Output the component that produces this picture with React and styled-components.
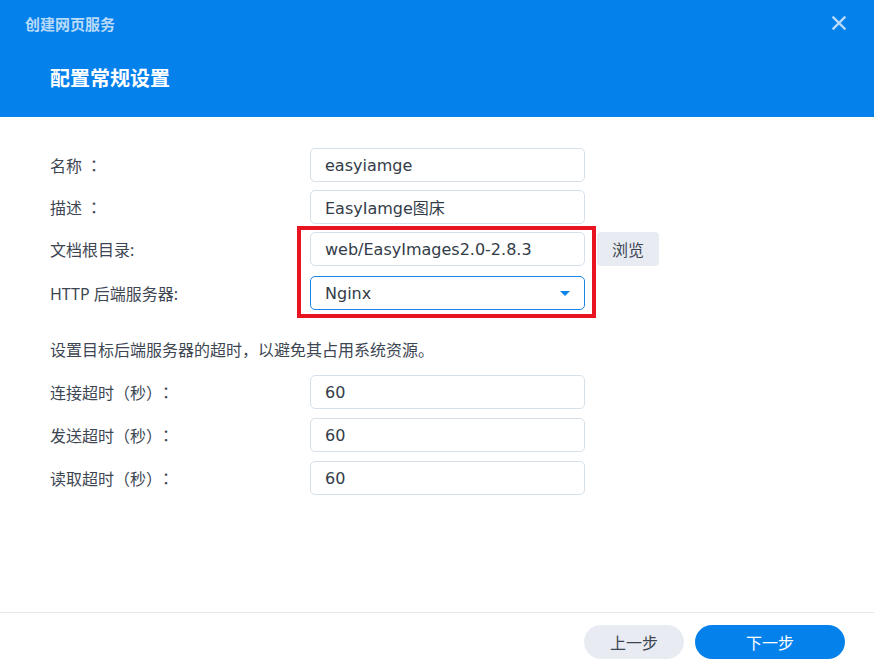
import React from 'react';
import styled, { createGlobalStyle } from 'styled-components';

const GlobalStyle = createGlobalStyle`
  html, body {
    margin: 0;
    padding: 0;
    background: #ffffff;
  }
  body {
    font-family: "Noto Sans", "Noto Sans CJK SC", sans-serif;
  }
`;

const Dialog = styled.div`
  width: 874px;
  height: 670px;
  display: flex;
  flex-direction: column;
  background: #fff;
  overflow: hidden;
`;

const Header = styled.header`
  height: 117px;
  box-sizing: border-box;
  background: #0581ec;
  display: flex;
  flex-direction: column;
  padding: 13px 25px 0 25px;
`;

const TopBar = styled.div`
  display: flex;
  align-items: center;
  justify-content: space-between;
  height: 20px;
`;

const DialogName = styled.div`
  font-size: 15px;
  font-weight: 700;
  color: rgba(255, 255, 255, 0.72);
`;

const CloseButton = styled.button`
  border: 0;
  background: transparent;
  padding: 0;
  width: 20px;
  height: 20px;
  display: flex;
  align-items: center;
  justify-content: center;
  cursor: pointer;
`;

const StepTitle = styled.h1`
  margin: 33px 0 0 25px;
  font-size: 20px;
  line-height: 26px;
  font-weight: 700;
  color: #fff;
`;

const Body = styled.main`
  flex: 1;
  padding: 31px 50px 0 50px;
`;

const Section = styled.div`
  position: relative;
  display: flex;
  flex-direction: column;
  gap: ${({ gap }) => gap || 8}px;
`;

const Row = styled.div`
  display: grid;
  grid-template-columns: 260px 275px auto;
  align-items: center;
`;

const Label = styled.label`
  font-size: 16px;
  color: #3d4652;
`;

const Colon = styled.span`
  font-family: "Noto Sans CJK TC", sans-serif;
  margin-left: 4px;
`;

const Field = styled.div`
  height: 34px;
  box-sizing: border-box;
  border: 1px solid ${({ focused }) => (focused ? '#1a86ea' : '#d7dfe8')};
  border-radius: 5px;
  display: flex;
  align-items: center;
  justify-content: space-between;
  padding: 0 14px 0 14px;
  font-family: "DejaVu Sans", "Noto Sans CJK SC", sans-serif;
  font-size: 16px;
  color: #333c48;
  background: #fff;
`;

const Caret = styled.span`
  width: 0;
  height: 0;
  border-left: 5px solid transparent;
  border-right: 5px solid transparent;
  border-top: 5px solid #0a84e8;
`;

const BrowseButton = styled.button`
  justify-self: start;
  margin-left: 12px;
  height: 34px;
  width: 62px;
  border: 0;
  border-radius: 4px;
  background: #e8ecf2;
  color: #3d4652;
  font-family: inherit;
  font-size: 16px;
`;

const Highlight = styled.div`
  position: absolute;
  left: 247px;
  top: 78px;
  width: 299px;
  height: 92px;
  box-sizing: border-box;
  border: 4px solid #e81521;
  pointer-events: none;
`;

const Note = styled.p`
  margin: 27px 0 14px 0;
  font-size: 16px;
  color: #3d4652;
`;

const Footer = styled.footer`
  height: 58px;
  box-sizing: border-box;
  border-top: 1px solid #e3e8ee;
  display: flex;
  justify-content: flex-end;
  align-items: flex-start;
  gap: 11px;
  padding: 12px 29px 0 0;
`;

const PillButton = styled.button`
  height: 34px;
  width: ${({ wide }) => (wide ? 150 : 100)}px;
  border: 0;
  border-radius: 17px;
  font-family: inherit;
  font-size: 16px;
  background: ${({ primary }) => (primary ? '#0581ec' : '#e8ecf2')};
  color: ${({ primary }) => (primary ? '#fff' : '#3d4652')};
`;

const App = () => (
  <>
    <GlobalStyle />
    <Dialog>
      <Header>
        <TopBar>
          <DialogName>创建网页服务</DialogName>
          <CloseButton aria-label="关闭">
            <svg width="14" height="14" viewBox="0 0 14 14">
              <path d="M1.5 1.5 L12.5 12.5 M12.5 1.5 L1.5 12.5" stroke="#b9dbfa" strokeWidth="2.4" strokeLinecap="square" />
            </svg>
          </CloseButton>
        </TopBar>
        <StepTitle>配置常规设置</StepTitle>
      </Header>

      <Body>
        <Section>
          <Row>
            <Label>名称<Colon>：</Colon></Label>
            <Field>easyiamge</Field>
          </Row>
          <Row>
            <Label>描述<Colon>：</Colon></Label>
            <Field>EasyIamge图床</Field>
          </Row>
          <Row>
            <Label>文档根目录:</Label>
            <Field>web/EasyImages2.0-2.8.3</Field>
            <BrowseButton>浏览</BrowseButton>
          </Row>
          <Row style={{ marginTop: 2 }}>
            <Label>HTTP 后端服务器:</Label>
            <Field focused>
              Nginx
              <Caret />
            </Field>
          </Row>
          <Highlight />
        </Section>

        <Note>设置目标后端服务器的超时，以避免其占用系统资源。</Note>

        <Section gap={9}>
          <Row>
            <Label>连接超时（秒）<Colon>：</Colon></Label>
            <Field>60</Field>
          </Row>
          <Row>
            <Label>发送超时（秒）<Colon>：</Colon></Label>
            <Field>60</Field>
          </Row>
          <Row>
            <Label>读取超时（秒）<Colon>：</Colon></Label>
            <Field>60</Field>
          </Row>
        </Section>
      </Body>

      <Footer>
        <PillButton>上一步</PillButton>
        <PillButton primary wide>下一步</PillButton>
      </Footer>
    </Dialog>
  </>
);

export default App;
